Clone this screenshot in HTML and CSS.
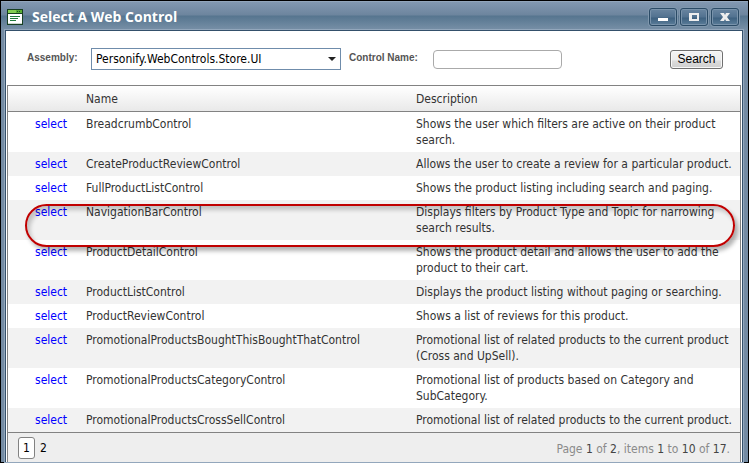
FILE: index.html
```html
<!DOCTYPE html>
<html lang="en">
<head>
<meta charset="UTF-8" />
<meta name="viewport" content="width=device-width, initial-scale=1" />
<title>Select A Web Control</title>
<link rel="stylesheet" href="styles.css">
</head>
<body>

<div class="window">
  <header class="titlebar">
    <svg class="app-icon" width="16" height="16" viewBox="0 0 16 16" aria-hidden="true">
      <rect x="0.5" y="0.5" width="15" height="15" fill="#fff" stroke="#173f22" />
      <rect x="1" y="1" width="14" height="3" fill="#59ad35" />
      <rect x="1" y="1" width="8" height="3" fill="#82cc50" />
      <path d="M10 2.5h1M12 2.5h1" stroke="#17511f" />
      <path d="M0 4.5h16" stroke="#173f22" />
      <path d="M3 7.5h10M3 9.5h8M3 11.5h6" stroke="#207a3c" />
      <path d="M1 14.5h14" stroke="#c9d6cc" />
    </svg>
    <h1>Select A Web Control</h1>
    <div class="window-buttons">
      <button type="button" aria-label="Minimize">
        <svg width="12" height="10" viewBox="0 0 12 10"><path d="M1 6h10v3H1z" fill="#fff" /></svg>
      </button>
      <button type="button" aria-label="Maximize">
        <svg width="12" height="10" viewBox="0 0 12 10"><path d="M1 1h10v8H1zM4 3v4h5V3z" fill="#eee" fill-rule="evenodd" /></svg>
      </button>
      <button type="button" aria-label="Close">
        <svg width="12" height="10" viewBox="0 0 12 10"><path d="M1 1h4l1 2 1-2h4L8 5l3 4H7L6 7 5 9H1l3-4z" fill="#eee" /></svg>
      </button>
    </div>
  </header>

  <main class="content">
    <form class="search">
      <label class="assembly-label" for="assembly">Assembly:</label>
      <div class="assembly">
        <select id="assembly">
          <option>Personify.WebControls.Store.UI</option>
        </select>
      </div>
      <label class="name-label" for="controlName">Control Name:</label>
      <input id="controlName" class="control-name" type="text">
      <button class="search-btn" type="button">Search</button>
    </form>

    <div class="grid">
      <table>
        <thead>
          <tr><th class="col-select"></th><th class="col-name">Name</th><th>Description</th></tr>
        </thead>
        <tbody>
          <tr><td><a href="#">select</a></td><td>BreadcrumbControl</td><td>Shows the user which filters are active on their product search.</td></tr>
          <tr><td><a href="#">select</a></td><td>CreateProductReviewControl</td><td>Allows the user to create a review for a particular product.</td></tr>
          <tr><td><a href="#">select</a></td><td>FullProductListControl</td><td>Shows the product listing including search and paging.</td></tr>
          <tr><td><a href="#">select</a></td><td>NavigationBarControl</td><td>Displays filters by Product Type and Topic for narrowing search results.</td></tr>
          <tr><td><a href="#">select</a></td><td>ProductDetailControl</td><td>Shows the product detail and allows the user to add the product to their cart.</td></tr>
          <tr><td><a href="#">select</a></td><td>ProductListControl</td><td>Displays the product listing without paging or searching.</td></tr>
          <tr><td><a href="#">select</a></td><td>ProductReviewControl</td><td>Shows a list of reviews for this product.</td></tr>
          <tr><td><a href="#">select</a></td><td>PromotionalProductsBoughtThisBoughtThatControl</td><td>Promotional list of related products to the current product (Cross and UpSell).</td></tr>
          <tr><td><a href="#">select</a></td><td>PromotionalProductsCategoryControl</td><td>Promotional list of products based on Category and SubCategory.</td></tr>
          <tr><td><a href="#">select</a></td><td>PromotionalProductsCrossSellControl</td><td>Promotional list of related products to the current product.</td></tr>
        </tbody>
      </table>
      <footer class="pager">
        <nav class="pages">
          <a class="page current" href="#">1</a>
          <a class="page" href="#">2</a>
        </nav>
        <div class="page-info">Page <b>1</b> of <b>2</b>, items <b>1</b> to <b>10</b> of <b>17</b>.</div>
      </footer>
      <div class="highlight"></div>
    </div>
  </main>
</div>

</body>
</html>
```

FILE: styles.css
```css
* {
  box-sizing: border-box;
}
body {
  margin: 0;
  background: #000;
  color: #333;
  font: 12px/16px "DejaVu Sans Condensed", "Open Sans", sans-serif;
}
.window {
  min-height: 100vh;
  padding: 0 5px 0 4px;
  display: flex;
  flex-direction: column;
  border: 1px solid #000;
  background: #748ba3;
}
.titlebar {
  height: 29px;
  margin: 0 -5px 0 -4px;
  padding: 2px 9px 0 6px;
  display: flex;
  align-items: center;
  border-top: 1px solid #92a6bc;
  background: linear-gradient(#8298b1, #6d859e 13px, #56758f 14px, #7890a7);
}
.titlebar h1 {
  flex: 1;
  margin: 0 0 0 9px;
  color: #fff;
  font: bold 14px/16px "Open Sans", sans-serif;
}
.window-buttons {
  display: flex;
  gap: 3px;
}
.window-buttons button {
  width: 28px;
  height: 18px;
  padding: 0;
  display: flex;
  align-items: center;
  justify-content: center;
  border: 1px solid #2b4b66;
  border-radius: 3px;
  background: linear-gradient(#6985a0, #527290 8px, #3e6180 9px, #5b7d99);
  box-shadow: inset 0 0 0 1px #7993ab, 0 0 0 1px #7f97ad;
}
.content {
  flex: 1;
  padding: 0 1px;
  display: flex;
  flex-direction: column;
  border: 1px solid #34506b;
  border-bottom: 0;
  background: #fff;
  box-shadow: 0 0 0 1px #93a7bc;
}
.search {
  height: 54px;
  padding: 2px 18px 0 20px;
  display: flex;
  align-items: center;
}
.search label {
  padding-bottom: 3px;
  color: #555;
  font: bold 10px/16px "Liberation Sans", Arial, sans-serif;
}
.assembly-label {
  width: 64px;
}
.name-label {
  width: 84px;
}
.assembly {
  position: relative;
  width: 250px;
  margin-right: 8px;
}
.assembly select {
  display: block;
  width: 100%;
  height: 22px;
  padding: 0 4px;
  appearance: none;
  border: 1px solid #6f8cab;
  border-radius: 0;
  background: #fff;
  color: #000;
  font: 12px/20px "DejaVu Sans Condensed", "Open Sans", sans-serif;
}
.assembly::after {
  content: "";
  position: absolute;
  top: 9px;
  right: 5px;
  border: 4px solid transparent;
  border-top-color: #222;
  border-bottom: 0;
  pointer-events: none;
}
.control-name {
  width: 129px;
  height: 19px;
  border: 1px solid #aaa;
  border-radius: 4px;
}
.search-btn {
  width: 53px;
  height: 19px;
  margin-left: auto;
  padding: 0;
  border: 1px solid #707070;
  border-radius: 3px;
  background: linear-gradient(#f4f4f4, #ececec 9px, #dcdcdc 10px, #cfcfcf);
  box-shadow: inset 0 0 0 1px #f8f8f8;
  color: #000;
  font: 12px/15px "Liberation Sans", Arial, sans-serif;
}
.grid {
  position: relative;
  flex: 1;
  display: flex;
  flex-direction: column;
  border: 1px solid #828282;
  border-bottom: 0;
}
table {
  width: 100%;
  table-layout: fixed;
  border-collapse: separate;
  border-spacing: 0;
}
.col-select {
  width: 71px;
}
.col-name {
  width: 330px;
}
th {
  height: 26px;
  padding: 4px 7px;
  border-bottom: 1px solid #828282;
  font-weight: normal;
  text-align: left;
}
thead tr {
  background: linear-gradient(#fff, #e8e8e8);
}
td {
  padding: 4px 7px;
  vertical-align: top;
}
td:first-child {
  padding-left: 27px;
}
tbody tr:nth-child(even) {
  background: #f2f2f2;
}
td a {
  color: #00f;
  text-decoration: none;
}
.pager {
  flex: 1;
  padding: 4px 10px 0;
  display: flex;
  justify-content: space-between;
  border-top: 1px solid #828282;
  background: #eee;
}
.pages {
  display: flex;
}
.page {
  height: 22px;
  padding: 2px 4px;
  border: 1px solid transparent;
  color: #000;
  text-decoration: none;
}
.page.current {
  border-color: #828282;
  border-radius: 3px;
  background: #fff;
}
.page-info {
  padding-top: 4px;
  color: #8a8a8a;
}
.page-info b {
  color: #444;
  font-weight: normal;
}
/* callout ring around the NavigationBarControl row */
.highlight {
  position: absolute;
  top: 118px;
  left: 17px;
  right: 5px;
  height: 43px;
  border: 2px solid #c00000;
  border-radius: 22px;
  box-shadow: 3px 4px 4px rgba(0, 0, 0, 0.3), inset 3px 4px 4px rgba(0, 0, 0, 0.2);
  pointer-events: none;
}
```
